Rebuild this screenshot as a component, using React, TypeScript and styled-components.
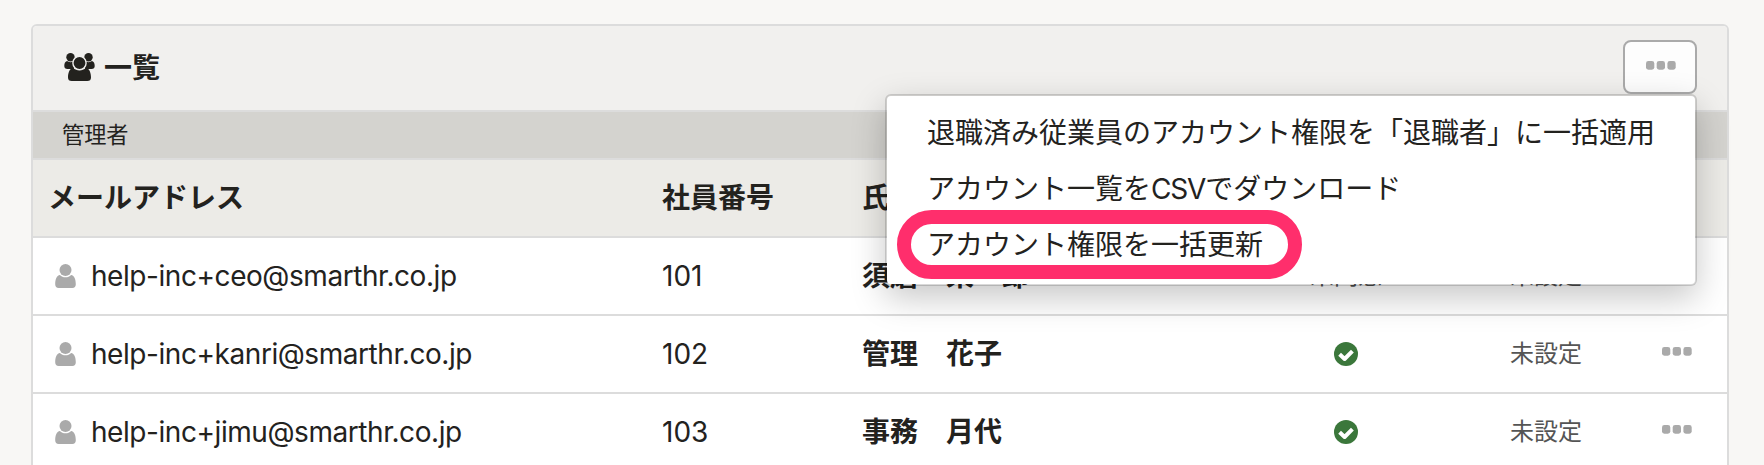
import React from 'react';
import styled, { createGlobalStyle } from 'styled-components';

const Global = createGlobalStyle`
  * { box-sizing: border-box; }
  html, body { margin: 0; height: 465px; overflow: hidden; background: #f8f7f5; }
  body { font-family: Inter, "Noto Sans CJK JP", sans-serif; color: #23221e; font-size: 28px; }
`;

const Page = styled.main`
  height: 465px;
  padding: 24px 35px 0 31px;
  overflow: hidden;
`;

const Card = styled.section`
  height: 500px;
  border: 2px solid #dcdcdc;
  border-radius: 6px;
  background: #fff;
`;

const Heading = styled.header`
  display: flex;
  align-items: center;
  justify-content: space-between;
  height: 86px;
  padding: 0 30px 2px 31px;
  border-bottom: 2px solid #dcdcdc;
  border-radius: 4px 4px 0 0;
  background: #f1f0ee;
`;

const Title = styled.h1`
  display: flex;
  align-items: center;
  gap: 8px;
  margin: 0;
  font-size: 28px;
  font-weight: 700;
  line-height: 40px;
`;

const TitleText = styled.span`
  padding-top: 2px;
`;

const MenuAnchor = styled.div`
  position: relative;
`;

const MoreButton = styled.button`
  display: flex;
  align-items: center;
  justify-content: center;
  width: 74px;
  height: 54px;
  padding: 0 0 3px 1px;
  border: 2px solid #aaa;
  border-radius: 8px;
  background: #fdfdfd;
`;

const Menu = styled.ul`
  position: absolute;
  z-index: 2;
  top: 54px;
  right: 0;
  width: 812px;
  margin: 0;
  padding: 10px 0;
  list-style: none;
  border: 2px solid rgba(0, 0, 0, 0.15);
  border-radius: 6px;
  background: #fff;
  background-clip: padding-box;
  box-shadow: 0 12px 34px rgba(0, 0, 0, 0.22);
`;

const MenuItem = styled.li`
  position: relative;
  height: 56px;
  padding-left: 40px;
  line-height: 55px;
  white-space: nowrap;
`;

const Latin = styled.span`
  letter-spacing: -1.2px;
`;

const Highlight = styled.span`
  position: absolute;
  left: 10px;
  top: -8px;
  width: 405px;
  height: 69px;
  border: 14px solid #ff2e6c;
  border-radius: 35px;
`;

const GroupBar = styled.div`
  height: 48px;
  padding-left: 29px;
  border-bottom: 2px solid #dcdcdc;
  background: #d4d3cf;
  font-size: 22.2px;
  line-height: 46px;
`;

const Row = styled.div<{ $head?: boolean }>`
  display: grid;
  grid-template-columns: 629px 200px 384px 200px 200px 1fr;
  align-items: center;
  height: 78px;
  padding-bottom: ${(p) => (p.$head ? 4 : 0)}px;
  border-bottom: 2px solid #dcdcdc;
  background: ${(p) => (p.$head ? '#ecebe7' : '#fff')};
  font-weight: ${(p) => (p.$head ? 700 : 400)};
`;

const MailHead = styled.div`
  padding-left: 15px;
`;

const Mail = styled.div`
  display: flex;
  align-items: center;
  gap: 15px;
  padding-left: 22px;
  letter-spacing: -0.44px;
`;

const Name = styled.div`
  padding-bottom: 4px;
  font-weight: 700;
  white-space: pre;
`;

const Status = styled.div`
  display: flex;
  justify-content: center;
  color: #555;
  font-size: 24px;
  line-height: 36px;
`;

const More = styled.div`
  display: flex;
  padding: 0 0 6px 16px;
`;

const UsersIcon = () => (
  <svg width="32" height="28" viewBox="0 0 32 28" fill="#23221e">
    <circle cx="6.5" cy="4.2" r="4.2" />
    <circle cx="24.5" cy="4.2" r="4.2" />
    <path d="M3 8C5 9.5 8 9.5 10 8V16H3.5Q.3 16 .3 13C.3 10.5 1 8.5 3 8Z" />
    <path d="M28 8C26 9.5 23 9.5 21 8V16H27.5Q30.7 16 30.7 13C30.7 10.5 30 8.5 28 8Z" />
    <circle cx="15.5" cy="10" r="6.6" stroke="#f1f0ee" strokeWidth="1.4" />
    <path
      d="M9 15C11 16.6 13 17.4 15.5 17.4S20 16.6 22 15C25.5 15.5 27 20 27 24.5Q27 28 23.2 28H7.8Q4 28 4 24.5C4 20 5.5 15.5 9 15Z"
    />
  </svg>
);

const UserIcon = () => (
  <svg width="21" height="24" viewBox="0 0 21 24" fill="#aaa">
    <circle cx="10.5" cy="6" r="6" />
    <path d="M4.9 11C6.4 12.4 8.2 13.3 10.5 13.3S14.6 12.4 16.1 11C19.3 11.3 20.8 15.5 20.8 20.3Q20.8 24 17.3 24H3.7Q.2 24 .2 20.3C.2 15.5 1.7 11.3 4.9 11Z" />
  </svg>
);

const Dots = () => (
  <svg width="30" height="9" viewBox="0 0 30 9" fill="#aaa">
    {[0, 10.7, 21.4].map((x) => (
      <rect key={x} x={x} y="0" width="8.3" height="8.7" rx="2.4" />
    ))}
  </svg>
);

const CheckIcon = () => (
  <svg width="24" height="24" viewBox="0 0 24 24">
    <circle cx="12" cy="12" r="12" fill="#3b773b" />
    <path
      d="M5.6 12.3L10.6 17L18.4 9.2"
      fill="none"
      stroke="#fff"
      strokeWidth="4"
      strokeLinejoin="round"
    />
  </svg>
);

const accounts = [
  { mail: 'help-inc+ceo@smarthr.co.jp', no: '101', name: '須磨　栄一郎', agreed: false },
  { mail: 'help-inc+kanri@smarthr.co.jp', no: '102', name: '管理　花子', agreed: true },
  { mail: 'help-inc+jimu@smarthr.co.jp', no: '103', name: '事務　月代', agreed: true },
];

export default function App() {
  return (
    <Page>
      <Global />
      <Card>
        <Heading>
          <Title>
            <UsersIcon />
            <TitleText>一覧</TitleText>
          </Title>
          <MenuAnchor>
            <MoreButton aria-label="メニュー">
              <Dots />
            </MoreButton>
            <Menu>
              <MenuItem>退職済み従業員のアカウント権限を「退職者」に一括適用</MenuItem>
              <MenuItem>
                アカウント一覧を<Latin>CSV</Latin>でダウンロード
              </MenuItem>
              <MenuItem>
                アカウント権限を一括更新
                <Highlight />
              </MenuItem>
            </Menu>
          </MenuAnchor>
        </Heading>
        <GroupBar>管理者</GroupBar>
        <Row $head>
          <MailHead>メールアドレス</MailHead>
          <div>社員番号</div>
          <div>氏名</div>
        </Row>
        {accounts.map((a) => (
          <Row key={a.no}>
            <Mail>
              <UserIcon />
              {a.mail}
            </Mail>
            <div>{a.no}</div>
            <Name>{a.name}</Name>
            <Status>{a.agreed ? <CheckIcon /> : '未同意'}</Status>
            <Status>未設定</Status>
            <More>
              <Dots />
            </More>
          </Row>
        ))}
      </Card>
    </Page>
  );
}
